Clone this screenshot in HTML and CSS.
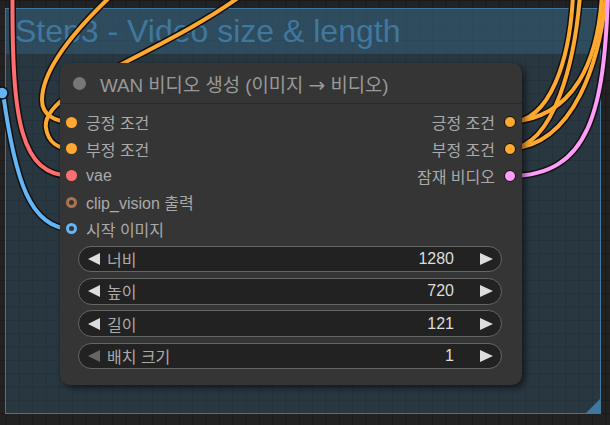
FILE: index.html
```html
<!DOCTYPE html>
<html lang="ko">
<head>
<meta charset="utf-8">
<title>WAN 비디오 생성</title>
<link rel="stylesheet" href="styles.css">
</head>
<body>
<div class="canvas">
  <div class="group">
    <div class="group-title">Step3 - Video size &amp; length</div>
    <div class="group-resize"></div>
  </div>

  <svg class="wires" width="610" height="425" viewBox="0 0 610 425">
    <g class="outline">
      <path d="M12.5 -5 C12 120, 20 176, 72 176"/>
      <path d="M3 93 C15 180, 30 229, 72 229"/>
      <path d="M112 -5 C75 30, 42 70, 42 100 C42 115, 55 122, 72 122"/>
      <path d="M242 -5 C160 55, 40 90, 46 128 C48 142, 58 149, 72 149"/>
      <path d="M510 122 C550 122, 570 60, 573 -5"/>
      <path d="M510 122 C575 118, 598 60, 602 -5"/>
      <path d="M510 149 C555 145, 575 60, 580 -5"/>
      <path d="M510 149 C575 145, 600 60, 606 -5"/>
      <path d="M510 176 C590 176, 604 110, 608 -5"/>
    </g>
    <path class="w-red" d="M12.5 -5 C12 120, 20 176, 72 176"/>
    <path class="w-blue" d="M3 93 C15 180, 30 229, 72 229"/>
    <path class="w-orange" d="M112 -5 C75 30, 42 70, 42 100 C42 115, 55 122, 72 122"/>
    <path class="w-orange" d="M242 -5 C160 55, 40 90, 46 128 C48 142, 58 149, 72 149"/>
    <path class="w-orange" d="M510 122 C550 122, 570 60, 573 -5"/>
    <path class="w-orange" d="M510 122 C575 118, 598 60, 602 -5"/>
    <path class="w-orange" d="M510 149 C555 145, 575 60, 580 -5"/>
    <path class="w-orange" d="M510 149 C575 145, 600 60, 606 -5"/>
    <path class="w-pink" d="M510 176 C590 176, 604 110, 608 -5"/>
    <circle class="reroute" cx="2" cy="93" r="6"/>
  </svg>

  <div class="node">
    <div class="node-title">
      <span class="title-dot"></span>
      <span class="title-text">WAN 비디오 생성 (이미지 <span class="title-arrow">→</span> 비디오)</span>
    </div>
    <div class="slots">
      <div class="inputs">
        <div class="slot"><span class="dot c-cond"></span><span class="slot-label">긍정 조건</span></div>
        <div class="slot"><span class="dot c-cond"></span><span class="slot-label">부정 조건</span></div>
        <div class="slot"><span class="dot c-vae"></span><span class="slot-label">vae</span></div>
        <div class="slot"><span class="dot ring c-clipv"></span><span class="slot-label">clip_vision 출력</span></div>
        <div class="slot"><span class="dot ring c-image"></span><span class="slot-label">시작 이미지</span></div>
      </div>
      <div class="outputs">
        <div class="slot"><span class="slot-label">긍정 조건</span><span class="dot out c-cond"></span></div>
        <div class="slot"><span class="slot-label">부정 조건</span><span class="dot out c-cond"></span></div>
        <div class="slot"><span class="slot-label">잠재 비디오</span><span class="dot out c-latent"></span></div>
      </div>
    </div>
    <div class="widgets">
      <div class="widget"><span class="arrow arrow-left"></span><span class="w-label">너비</span><span class="w-value">1280</span><span class="arrow arrow-right"></span></div>
      <div class="widget"><span class="arrow arrow-left"></span><span class="w-label">높이</span><span class="w-value">720</span><span class="arrow arrow-right"></span></div>
      <div class="widget"><span class="arrow arrow-left"></span><span class="w-label">길이</span><span class="w-value">121</span><span class="arrow arrow-right"></span></div>
      <div class="widget"><span class="arrow arrow-left disabled"></span><span class="w-label">배치 크기</span><span class="w-value">1</span><span class="arrow arrow-right"></span></div>
    </div>
  </div>
</div>
</body>
</html>
```

FILE: styles.css
```css
* { box-sizing: border-box; }

html, body {
  margin: 0;
  padding: 0;
  background: #222;
}

body {
  font-family: "Liberation Sans", Arial, "Noto Sans CJK KR", sans-serif;
}

.canvas {
  position: relative;
  width: 610px;
  height: 425px;
  overflow: hidden;
  background-color: #222;
  background-image:
    linear-gradient(to right, #1a1a1a 1px, transparent 1px),
    linear-gradient(to bottom, #1a1a1a 1px, transparent 1px);
  background-size: 13.333px 13.333px;
  background-position: 5.67px 0;
}

/* group */
.group {
  position: absolute;
  left: 5px;
  top: 8px;
  width: 596px;
  height: 406px;
  background: rgba(63, 120, 158, 0.25);
  border: 1.5px solid #3f789e;
}

.group-title {
  height: 45px;
  background: rgba(63, 120, 158, 0.32);
  color: #3f789e;
  font-size: 32px;
  line-height: 45px;
  padding-left: 9px;
  white-space: nowrap;
}

.group-resize {
  position: absolute;
  right: 0;
  bottom: 0;
  width: 0;
  height: 0;
  border-left: 14px solid transparent;
  border-bottom: 14px solid #3f789e;
}

/* wires */
.wires {
  position: absolute;
  left: 0;
  top: 0;
  fill: none;
}

.wires .outline path {
  stroke: #111;
  stroke-width: 7;
}

.w-red, .w-blue, .w-orange, .w-pink {
  stroke-width: 4;
  fill: none;
}
.w-red { stroke: #ff6e6e; }
.w-blue { stroke: #64b5f6; }
.w-orange { stroke: #ffa931; }
.w-pink { stroke: #ff9cf9; }

.reroute {
  fill: #64b5f6;
  stroke: #111;
  stroke-width: 1.5;
}

/* node */
.node {
  position: absolute;
  left: 60px;
  top: 63px;
  width: 462px;
  height: 322px;
  background: #353535;
  border-radius: 10px;
  box-shadow: 3px 3px 6px rgba(0, 0, 0, 0.55);
  display: flex;
  flex-direction: column;
}

.node-title {
  height: 41px;
  border-bottom: 1px solid #2a2a2a;
  display: flex;
  align-items: center;
  padding-left: 13px;
  gap: 14px;
}

.title-dot {
  width: 13px;
  height: 13px;
  border-radius: 50%;
  background: #777;
}

.title-text {
  color: #999;
  font-size: 18.8px;
  white-space: nowrap;
}

.title-arrow {
  font-family: "DejaVu Sans", sans-serif;
  font-size: 20px;
}

.slots {
  display: flex;
  justify-content: space-between;
  padding-top: 5px;
}

.inputs, .outputs {
  display: flex;
  flex-direction: column;
}

.slot {
  height: 26.67px;
  display: flex;
  align-items: center;
  font-size: 16px;
  color: #aaa;
  white-space: nowrap;
}

.inputs .slot {
  padding-left: 6px;
  gap: 9px;
}

.outputs .slot {
  justify-content: flex-end;
  padding-right: 6px;
  gap: 9px;
}

.dot {
  width: 11px;
  height: 11px;
  border-radius: 50%;
  flex: none;
}

.dot.out {
  width: 12px;
  height: 12px;
  border: 1.5px solid #111;
}

.dot.ring {
  border-width: 3px;
  border-style: solid;
  background: #353535;
}

.c-cond { background: #ffa931; }
.c-vae { background: #ff6e6e; }
.c-latent { background: #ff9cf9; }
.dot.ring.c-clipv { border-color: #a87451; }
.dot.ring.c-image { border-color: #64b5f6; }

/* widgets */
.widgets {
  display: flex;
  flex-direction: column;
  gap: 5.7px;
  padding: 3.3px 20px 0 18px;
}

.widget {
  height: 26.7px;
  background: #222;
  border: 1px solid #666;
  border-radius: 14px;
  display: flex;
  align-items: center;
  padding: 0 8px 0 9px;
  font-size: 16px;
  white-space: nowrap;
}

.arrow {
  width: 0;
  height: 0;
  border-top: 6.5px solid transparent;
  border-bottom: 6.5px solid transparent;
  flex: none;
}

.arrow-left { border-right: 12.5px solid #ddd; }
.arrow-left.disabled { border-right-color: #666; }
.arrow-right { border-left: 13px solid #ddd; margin-left: 26px; }

.w-label {
  color: #aaa;
  margin-left: 7px;
}

.w-value {
  color: #ddd;
  margin-left: auto;
}
```
